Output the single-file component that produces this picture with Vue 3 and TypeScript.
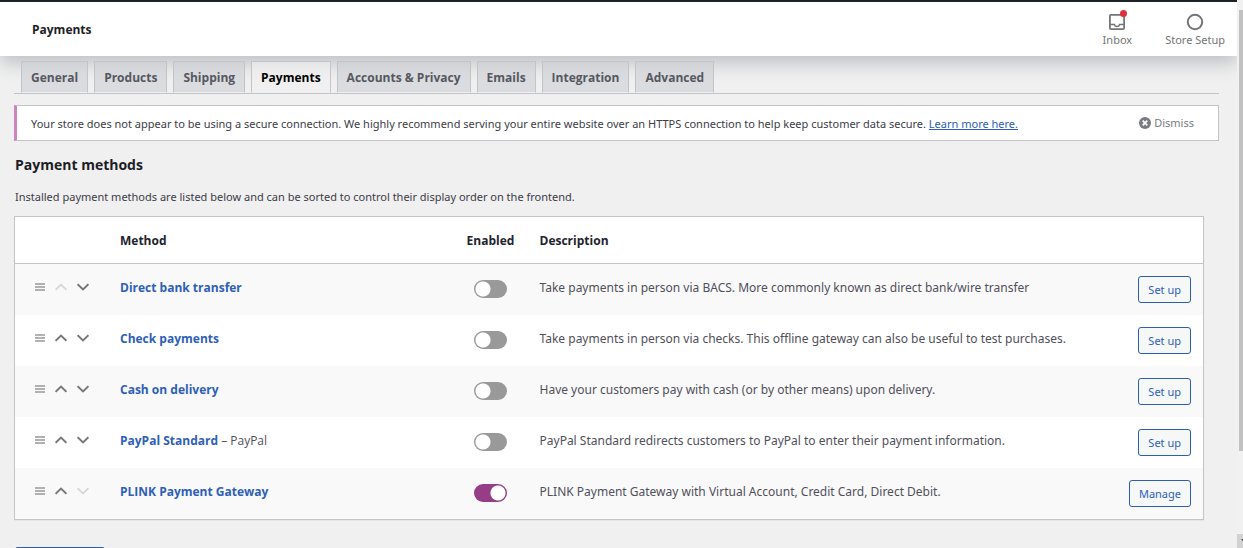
<script setup lang="ts">
import { ref } from 'vue'

interface Gateway {
  id: string
  title: string
  suffix?: string
  description: string
  enabled: boolean
  action: string
}

const tabs: string[] = [
  'General',
  'Products',
  'Shipping',
  'Payments',
  'Accounts & Privacy',
  'Emails',
  'Integration',
  'Advanced',
]
const activeTab = ref('Payments')

const gateways = ref<Gateway[]>([
  {
    id: 'bacs',
    title: 'Direct bank transfer',
    description: 'Take payments in person via BACS. More commonly known as direct bank/wire transfer',
    enabled: false,
    action: 'Set up',
  },
  {
    id: 'cheque',
    title: 'Check payments',
    description:
      'Take payments in person via checks. This offline gateway can also be useful to test purchases.',
    enabled: false,
    action: 'Set up',
  },
  {
    id: 'cod',
    title: 'Cash on delivery',
    description: 'Have your customers pay with cash (or by other means) upon delivery.',
    enabled: false,
    action: 'Set up',
  },
  {
    id: 'paypal',
    title: 'PayPal Standard',
    suffix: 'PayPal',
    description: 'PayPal Standard redirects customers to PayPal to enter their payment information.',
    enabled: false,
    action: 'Set up',
  },
  {
    id: 'plink',
    title: 'PLINK Payment Gateway',
    description: 'PLINK Payment Gateway with Virtual Account, Credit Card, Direct Debit.',
    enabled: true,
    action: 'Manage',
  },
])

function move(index: number, step: number): void {
  const list = gateways.value
  const target = index + step
  if (target < 0 || target >= list.length) return
  const [item] = list.splice(index, 1)
  list.splice(target, 0, item)
}
</script>

<template>
  <div class="screen">
    <div class="page">
      <header class="topbar">
        <h1>Payments</h1>
        <div class="activity">
          <button type="button" class="activity-btn">
            <span class="activity-icon">
              <svg width="18" height="18" viewBox="0 0 18 18" fill="none" stroke="#757575" aria-hidden="true">
                <rect x="1.9" y="1.9" width="14.2" height="14.2" rx="1" stroke-width="1.8" />
                <path d="M2 11.6h4.400c.3 1.400 1.300 2 2.600 2s2.300-.6 2.600-2H16" stroke-width="1.5" />
              </svg>
              <span class="unread"></span>
            </span>
            Inbox
          </button>
          <button type="button" class="activity-btn">
            <span class="activity-icon">
              <svg width="18" height="18" viewBox="0 0 18 18" fill="none" stroke="#757575" aria-hidden="true">
                <circle cx="9" cy="9" r="7.2" stroke-width="2" />
              </svg>
            </span>
            Store Setup
          </button>
        </div>
      </header>

      <main class="content">
        <nav class="tabs">
          <a
            v-for="tab in tabs"
            :key="tab"
            href="#"
            class="tab"
            :class="{ active: tab === activeTab }"
            @click.prevent="activeTab = tab"
            >{{ tab }}</a
          >
        </nav>

        <div class="notice">
          <p>
            Your store does not appear to be using a secure connection. We highly recommend serving your entire
            website over an HTTPS connection to help keep customer data secure.
            <a href="#">Learn more here.</a>
          </p>
          <button type="button" class="dismiss">
            <svg width="12" height="12" viewBox="0 0 12 12" aria-hidden="true">
              <circle cx="6" cy="6" r="6" fill="#787c82" />
              <path d="M3.7 3.7l4.6 4.6M8.3 3.7L3.7 8.3" stroke="#fff" stroke-width="1.8" />
            </svg>
            Dismiss
          </button>
        </div>

        <h2>Payment methods</h2>
        <p class="intro">
          Installed payment methods are listed below and can be sorted to control their display order on the
          frontend.
        </p>

        <table class="gateways">
          <thead>
            <tr>
              <th class="sort"></th>
              <th class="name">Method</th>
              <th class="status">Enabled</th>
              <th class="description">Description</th>
              <th class="action"></th>
            </tr>
          </thead>
          <tbody>
            <tr v-for="(gateway, index) in gateways" :key="gateway.id">
              <td class="sort">
                <div class="sort-tools">
                  <svg class="handle" width="10" height="8" viewBox="0 0 10 8" aria-hidden="true">
                    <path d="M0 1h10M0 4h10M0 7h10" stroke="#999" stroke-width="1.3" />
                  </svg>
                  <button
                    type="button"
                    :disabled="index === 0"
                    :aria-label="`Move ${gateway.title} up`"
                    @click="move(index, -1)"
                  >
                    <svg width="12" height="8" viewBox="0 0 12 8" aria-hidden="true">
                      <path d="M.6 6.8L6 1.6l5.4 5.2" fill="none" stroke="currentColor" stroke-width="1.9" />
                    </svg>
                  </button>
                  <button
                    type="button"
                    :disabled="index === gateways.length - 1"
                    :aria-label="`Move ${gateway.title} down`"
                    @click="move(index, 1)"
                  >
                    <svg width="12" height="8" viewBox="0 0 12 8" aria-hidden="true">
                      <path d="M.6 1.2L6 6.4l5.4-5.2" fill="none" stroke="currentColor" stroke-width="1.9" />
                    </svg>
                  </button>
                </div>
              </td>
              <td class="name">
                <a href="#">{{ gateway.title }}</a
                ><span v-if="gateway.suffix"> – {{ gateway.suffix }}</span>
              </td>
              <td class="status">
                <input
                  v-model="gateway.enabled"
                  type="checkbox"
                  class="toggle"
                  :aria-label="`Enable ${gateway.title}`"
                />
              </td>
              <td class="description">{{ gateway.description }}</td>
              <td class="action">
                <button type="button" class="setup">{{ gateway.action }}</button>
              </td>
            </tr>
          </tbody>
        </table>

        <button type="submit" class="save" aria-label="Save changes"></button>
      </main>
    </div>

    <div class="scrollbar" aria-hidden="true">
      <div class="thumb"></div>
      <div class="scroll-down">
        <svg width="6" height="14" viewBox="0 0 6 14"><path d="M4 5h7l-3.500 4z" fill="#505050" /></svg>
      </div>
    </div>
  </div>
</template>

<style>
body {
  margin: 0;
  background: #f0f0f0;
}
</style>

<style scoped>
.screen {
  display: flex;
  height: 100vh;
  overflow: hidden;
  background: #f0f0f0;
  color: #50505a;
  font-family: 'Open Sans', 'Noto Sans', sans-serif;
  font-size: 12px;
  line-height: 20px;
}

.screen * {
  box-sizing: border-box;
}

button {
  margin: 0;
  padding: 0;
  border: 0;
  background: none;
  color: inherit;
  font: inherit;
  cursor: pointer;
}

.page {
  flex: 1;
  min-width: 0;
  overflow: hidden;
}

.topbar {
  display: flex;
  align-items: center;
  justify-content: space-between;
  height: 56px;
  padding: 0 12px 0 32px;
  border-top: 2px solid #1d2327;
  background: #fff;
  box-shadow: 0 8px 16px 0 rgba(85, 93, 102, 0.3);
}

h1 {
  margin: 0;
  padding-top: 2px;
  color: #1e1e26;
  font-size: 12px;
  font-weight: 700;
}

.activity {
  display: flex;
  gap: 33px;
}

.activity-btn {
  display: flex;
  flex-direction: column;
  align-items: center;
  padding-top: 3px;
  color: #757575;
  font-family: 'Noto Sans', sans-serif;
  font-size: 11px;
  line-height: 16px;
}

.activity-icon {
  position: relative;
  height: 19px;
}

.activity-icon svg {
  display: block;
}

.unread {
  position: absolute;
  top: -3px;
  right: -1px;
  width: 7px;
  height: 7px;
  border-radius: 50%;
  background: #e0303c;
}

.content {
  padding: 5px 18px 0 14px;
}

.tabs {
  display: flex;
  gap: 6px;
  padding-left: 7px;
  border-bottom: 1px solid #c3c4c7;
}

.tab {
  height: 32px;
  padding: 6px 9px 0;
  border: 1px solid #c3c4c7;
  border-bottom: 1px solid #f0f0f0;
  background: rgba(205, 206, 211, 0.6);
  color: #555860;
  font-weight: 700;
  text-decoration: none;
  white-space: nowrap;
}

.tab.active {
  background: rgba(240, 240, 240, 0.6);
  color: #000;
}

.notice {
  display: flex;
  align-items: center;
  justify-content: space-between;
  margin-top: 11px;
  height: 36px;
  padding: 0 24px 0 14px;
  border: 1px solid #c3c4c7;
  border-left: 3px solid #cc85bf;
  background: #fff;
}

.notice p {
  margin: 0;
  padding-top: 1px;
  color: #3c3c46;
  font-family: 'Noto Sans', sans-serif;
  font-size: 11px;
}

.notice a {
  color: #2b5eb4;
}

.dismiss {
  display: flex;
  align-items: center;
  gap: 3px;
  color: #787c82;
  font-family: 'Noto Sans', sans-serif;
  font-size: 11px;
}

h2 {
  margin: 14px 0 12px;
  padding-left: 1px;
  color: #1d1d26;
  font-size: 14px;
  font-weight: 700;
  line-height: 20px;
}

.intro {
  margin: 0 0 9px;
  padding-left: 1px;
  color: #3c3c46;
  font-family: 'Noto Sans', sans-serif;
  font-size: 11px;
}

.gateways {
  width: calc(100% - 15px);
  border: 1px solid #c3c4c7;
  border-spacing: 0;
  background: #fff;
  box-shadow: 0 1px 1px rgba(0, 0, 0, 0.04);
  table-layout: fixed;
}

th {
  height: 47px;
  padding: 2px 10px 0;
  border-bottom: 1px solid #c3c4c7;
  color: #23232d;
  font-weight: 700;
  text-align: left;
}

td {
  height: 51px;
  padding: 14px 10px 0;
  vertical-align: top;
}

tbody tr:nth-child(odd) {
  background: #f9f9f9;
}

.sort {
  width: 95px;
}

.name {
  width: 29%;
}

.status {
  width: 72px;
  padding-right: 0;
  padding-left: 0;
  text-align: center;
}

.description {
  padding-right: 0;
  padding-left: 13px;
}

td.description {
  font-family: 'Noto Sans', sans-serif;
}

.action {
  width: 100px;
  padding: 12px 12px 0 0;
  text-align: right;
}

.sort-tools {
  display: flex;
  align-items: center;
  gap: 10px;
  height: 18px;
  padding-left: 10px;
  color: #777;
}

.sort-tools svg {
  display: block;
}

.sort-tools button:disabled {
  color: #d8d8d8;
  cursor: default;
}

.name a {
  color: #2f5fb7;
  font-weight: 700;
  text-decoration: none;
}

.toggle {
  display: block;
  width: 33px;
  height: 18px;
  margin: 2px auto 0;
  border-radius: 9px;
  appearance: none;
  background: radial-gradient(circle at 9px 9px, #fff 7px, transparent 8px) #999;
  cursor: pointer;
}

.toggle:checked {
  background: radial-gradient(circle at 24px 9px, #fff 7px, transparent 8px) #963d87;
}

.setup {
  height: 27px;
  padding: 0 9px;
  border: 1px solid #2b5eb4;
  border-radius: 3px;
  background: #f6f7f7;
  color: #2f5fb7;
  font-family: 'Noto Sans', sans-serif;
  font-size: 11px;
}

.save {
  display: block;
  width: 90px;
  height: 30px;
  margin: 27px 0 0 1px;
  border-radius: 3px;
  background: #2b5eb4;
}

.scrollbar {
  display: flex;
  flex: none;
  flex-direction: column;
  justify-content: space-between;
  width: 6px;
  padding-top: 10px;
  background: #f1f1f1;
}

.thumb {
  height: 82%;
  margin-left: 2px;
  background: #c1c1c1;
}

.scroll-down {
  height: 14px;
  background: #d2d2d2;
}

.scroll-down svg {
  display: block;
}
</style>
